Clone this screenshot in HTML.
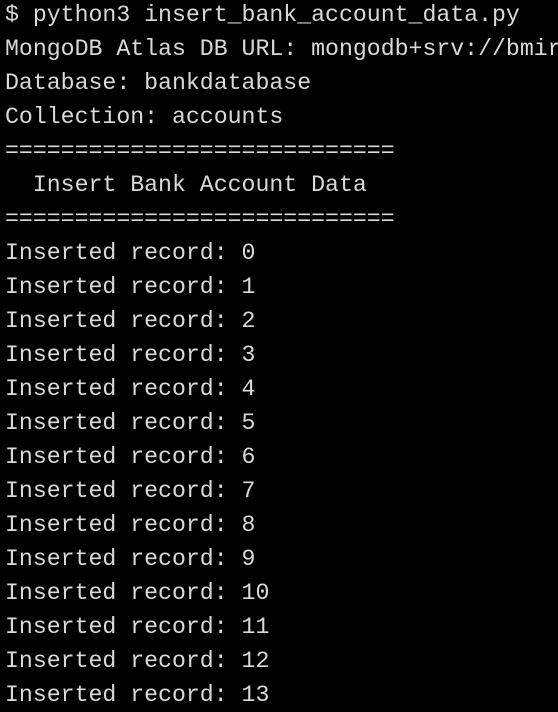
<!DOCTYPE html>
<html><head><style>
html,body{margin:0;padding:0;background:#000;width:558px;height:712px;overflow:hidden}
pre{margin:-2px 0 0 0;padding:0 0 0 5px;font-family:"Liberation Mono",monospace;font-size:23.2px;line-height:34px;color:#d9d9d9;white-space:pre}
</style></head><body><pre>$ python3 insert_bank_account_data.py
MongoDB Atlas DB URL: mongodb+srv://bmir
Database: bankdatabase
Collection: accounts
============================
  Insert Bank Account Data
============================
Inserted record: 0
Inserted record: 1
Inserted record: 2
Inserted record: 3
Inserted record: 4
Inserted record: 5
Inserted record: 6
Inserted record: 7
Inserted record: 8
Inserted record: 9
Inserted record: 10
Inserted record: 11
Inserted record: 12
Inserted record: 13</pre></body></html>
